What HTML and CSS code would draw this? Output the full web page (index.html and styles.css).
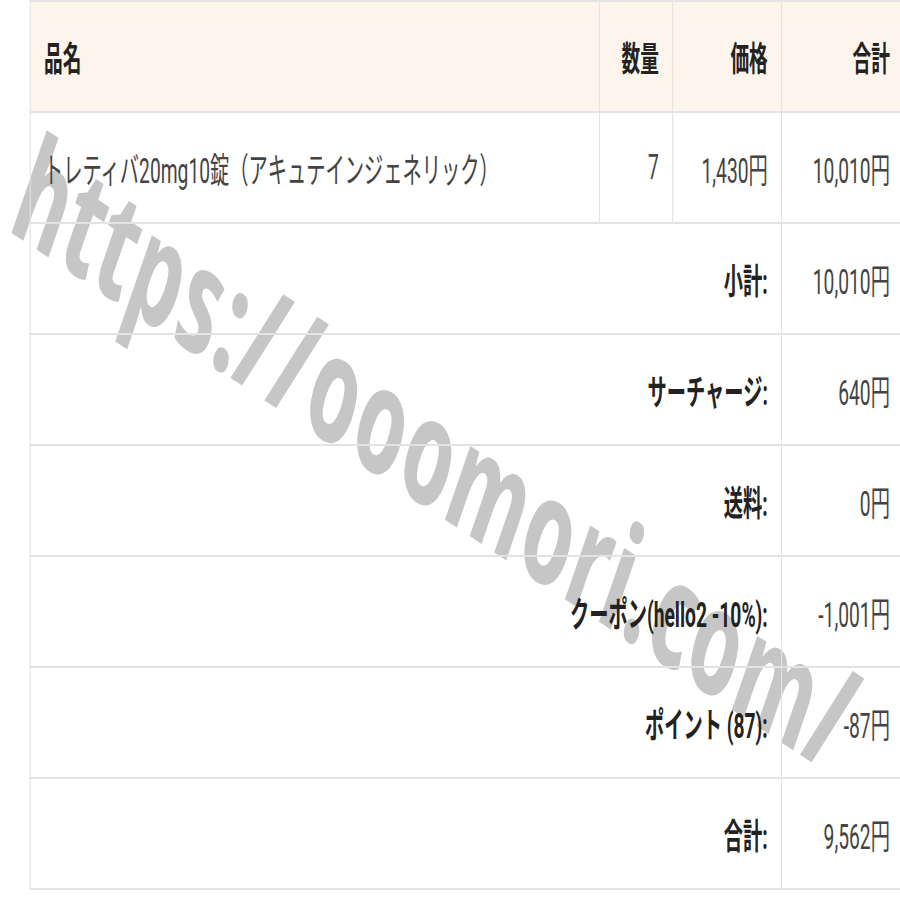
FILE: index.html
```html
<html lang="ja">
<head>
  <meta charset="UTF-8">
  <meta name="viewport" content="width=device-width, initial-scale=1.0">
  <title>注文内容</title>
  <link rel="stylesheet" href="styles.css">
</head>
<body>
  <div class="sheet">
    <span class="watermark">https://ooomori.com/</span>

    <table class="order">
      <colgroup>
        <col class="col-name">
        <col class="col-qty">
        <col class="col-price">
        <col class="col-total">
      </colgroup>
      <thead>
        <tr>
          <th class="left">品名</th>
          <th>数量</th>
          <th>価格</th>
          <th>合計</th>
        </tr>
      </thead>
      <tbody>
        <tr>
          <td class="left">トレティバ20mg10錠（アキュテインジェネリック）</td>
          <td>7</td>
          <td>1,430円</td>
          <td>10,010円</td>
        </tr>
      </tbody>
      <tfoot>
        <tr>
          <th colspan="3">小計:</th>
          <td>10,010円</td>
        </tr>
        <tr>
          <th colspan="3">サーチャージ:</th>
          <td>640円</td>
        </tr>
        <tr>
          <th colspan="3">送料:</th>
          <td>0円</td>
        </tr>
        <tr>
          <th colspan="3">クーポン(hello2 -10%):</th>
          <td>-1,001円</td>
        </tr>
        <tr>
          <th colspan="3">ポイント (87):</th>
          <td>-87円</td>
        </tr>
        <tr>
          <th colspan="3">合計:</th>
          <td>9,562円</td>
        </tr>
      </tfoot>
    </table>
  </div>
</body>
</html>
```

FILE: styles.css
```css
html, body{
  margin: 0;
  overflow: hidden;
  background: white;
}
body{
  font-family: Roboto, "Noto Sans CJK JP", sans-serif;
}
.sheet{
  position: relative;
  width: 1636px;
  transform: scaleX(0.55);
  transform-origin: 0 0;
}
.watermark{
  position: absolute;
  left: 18px;
  top: 94px;
  z-index: 0;
  font-family: "Open Sans", sans-serif;
  font-size: 156px;
  font-weight: bold;
  font-style: italic;
  line-height: 1;
  white-space: nowrap;
  color: #c6c6c6;
  transform: rotate(20deg);
  transform-origin: 0 139px;
}
.order{
  position: relative;
  z-index: 1;
  margin-left: 54px;
  width: 1590px;
  table-layout: fixed;
  border-collapse: collapse;
  font-size: 35px;
}
.col-name{
  width: 1035px;
}
.col-qty{
  width: 133px;
}
.col-price{
  width: 198px;
}
.order th, .order td{
  box-sizing: border-box;
  height: 111px;
  padding: 0 24px;
  border: 2px solid #e3e3e3;
  text-align: right;
  vertical-align: middle;
  white-space: nowrap;
}
.order th{
  color: #222;
  font-weight: bold;
}
.order td{
  color: #444;
}
.order thead th{
  font-size: 34px;
  background: #fdf5ec;
}
.order .left{
  text-align: left;
}
```
